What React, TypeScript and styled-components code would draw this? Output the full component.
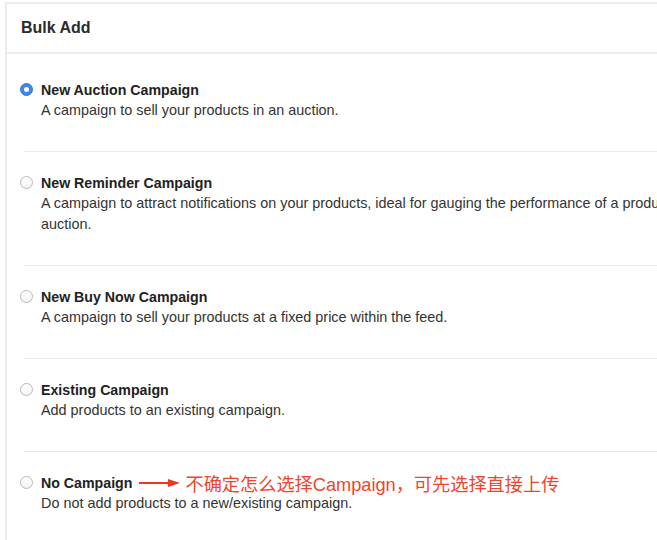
import React from "react"
import styled, { createGlobalStyle } from "styled-components"

const GlobalStyle = createGlobalStyle`
  html, body {
    margin: 0;
    padding: 0;
    background: #ffffff;
    overflow: hidden;
  }
  body {
    font-family: "Liberation Sans", Arial, "Noto Sans CJK SC", sans-serif;
  }
`

const Page = styled.div`
  width: 657px;
  height: 540px;
  overflow: hidden;
  padding: 2px 0 0 5px;
  box-sizing: border-box;
`

const Panel = styled.div`
  width: 900px;
  border-top: 2px solid #ececec;
  border-left: 2px solid #ececec;
  background: #fff;
`

const Header = styled.div`
  height: 48px;
  display: flex;
  align-items: center;
  padding-left: 14px;
  border-bottom: 2px solid #ececec;
  font-size: 16px;
  font-weight: 700;
  color: #2b2b2b;
`

const List = styled.div`
  padding-top: 5px;
`

const Item = styled.label`
  display: grid;
  grid-template-columns: 13px 1fr;
  column-gap: 8px;
  padding: 21px 0 30.5px 13px;
`

const Divider = styled.div`
  height: 1px;
  margin-left: 17px;
  background: #eaeaea;
`

const Radio = styled.span<{ $checked?: boolean }>`
  width: 13px;
  height: 13px;
  margin-top: 3px;
  border-radius: 50%;
  box-sizing: border-box;
  display: flex;
  align-items: center;
  justify-content: center;
  ${(p) =>
    p.$checked
      ? `background: #3d87ef; border: 1px solid #2f78e0;`
      : `background: linear-gradient(#ffffff, #f3f3f3); border: 1px solid #b9b9b9;`}
  &::after {
    content: "";
    width: 5px;
    height: 5px;
    border-radius: 50%;
    background: #fff;
    display: ${(p) => (p.$checked ? "block" : "none")};
  }
`

const Body = styled.div`
  display: flex;
  flex-direction: column;
`

const TitleRow = styled.div`
  display: flex;
  align-items: center;
  height: 20px;
`

const Title = styled.span`
  font-size: 14.2px;
  font-weight: 700;
  color: #222;
  line-height: 20px;
  white-space: nowrap;
`

const Desc = styled.div`
  font-size: 14.4px;
  line-height: 20.5px;
  color: #333;
  max-width: 800px;
`

const Note = styled.span`
  display: flex;
  align-items: center;
  margin-left: 7px;
  color: #f0452a;
  font-size: 18.2px;
  white-space: nowrap;
  font-family: "Liberation Sans", Arial, "Noto Sans CJK SC", sans-serif;
`

const Arrow = () => (
  <svg width="41" height="10" viewBox="0 0 41 10" style={{ marginRight: 5 }}>
    <path d="M0 5 L31 5" stroke="#f0351c" strokeWidth="2" />
    <path d="M29 1 L41 5 L29 9 Z" fill="#f0351c" />
  </svg>
)

const options = [
  {
    title: "New Auction Campaign",
    desc: "A campaign to sell your products in an auction.",
    checked: true,
  },
  {
    title: "New Reminder Campaign",
    desc: "A campaign to attract notifications on your products, ideal for gauging the performance of a product before running an auction.",
  },
  {
    title: "New Buy Now Campaign",
    desc: "A campaign to sell your products at a fixed price within the feed.",
  },
  {
    title: "Existing Campaign",
    desc: "Add products to an existing campaign.",
  },
  {
    title: "No Campaign",
    desc: "Do not add products to a new/existing campaign.",
    note: "不确定怎么选择Campaign，可先选择直接上传",
  },
]

const App = () => {
  return (
    <>
      <GlobalStyle />
      <Page>
        <Panel>
          <Header>Bulk Add</Header>
          <List>
            {options.map((o, i) => (
              <React.Fragment key={o.title}>
                {i > 0 && <Divider />}
                <Item>
                  <Radio $checked={o.checked} />
                  <Body>
                    <TitleRow>
                      <Title>{o.title}</Title>
                      {o.note && (
                        <Note>
                          <Arrow />
                          {o.note}
                        </Note>
                      )}
                    </TitleRow>
                    <Desc>{o.desc}</Desc>
                  </Body>
                </Item>
              </React.Fragment>
            ))}
          </List>
        </Panel>
      </Page>
    </>
  )
}

export default App
